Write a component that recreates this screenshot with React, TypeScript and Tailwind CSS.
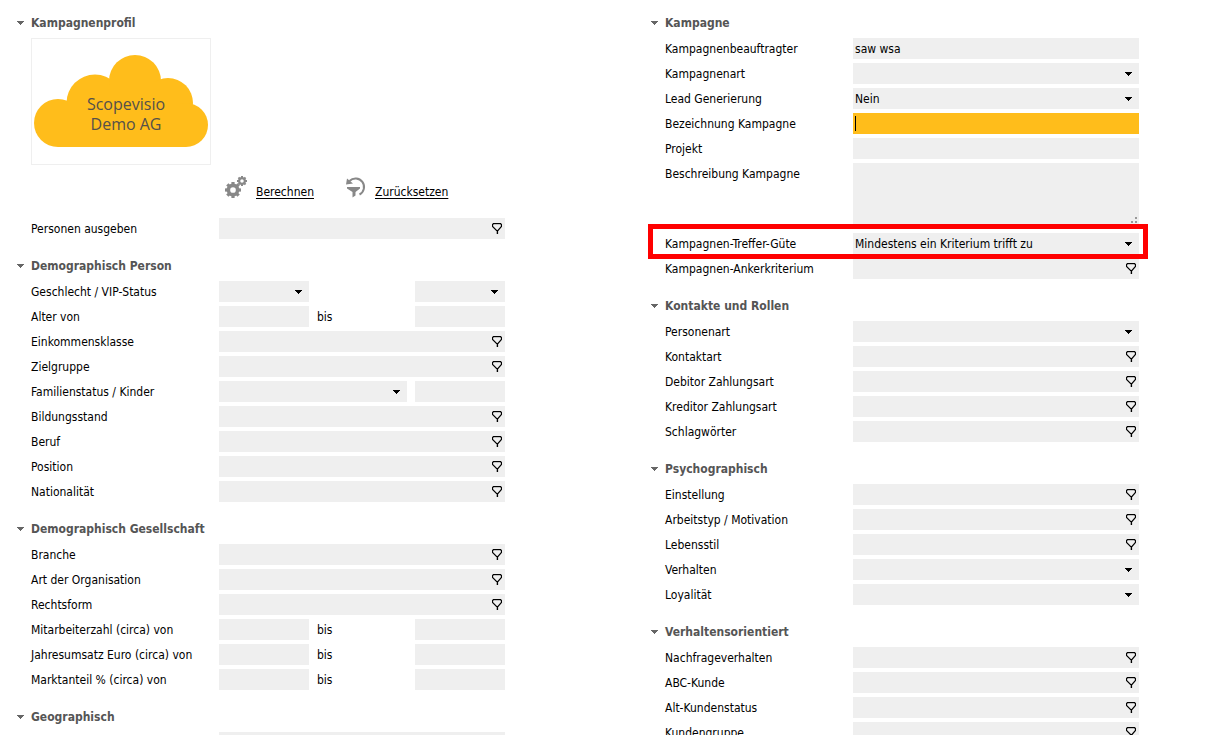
import React from "react";

type Kind = "text" | "select" | "lookup";

interface FieldProps {
  id: string;
  label: string;
  kind?: Kind;
  value?: string;
  active?: boolean;
  className?: string;
}

interface RowData {
  label: string;
  kind?: Kind;
  value?: string;
  active?: boolean;
}

const Arrow = ({ className = "" }: { className?: string }) => (
  <svg className={className} width="7" height="4" viewBox="0 0 7 4" fill="currentColor" shapeRendering="crispEdges">
    <path d="M0 0h7v1H6v1H5v1H4v1H3V3H2V2H1V1H0z" />
  </svg>
);

const LookupIcon = () => (
  <svg width="10" height="11" viewBox="0 0 10 11" fill="none" stroke="black">
    <path d="M1.5 0.5h7l1 1v2L6 7.500H4.500L0.500 3.500v-2z" strokeWidth="1.200" />
    <path d="M1 0.600h8" strokeWidth="1.200" />
    <path d="M5.400 7v4" strokeWidth="1.400" />
  </svg>
);

const Field = ({ id, label, kind = "text", value = "", active = false, className = "flex-1" }: FieldProps) => (
  <div className={`relative flex h-[21px] min-w-0 ${active ? "bg-[#ffbd1b]" : "bg-[#efefef]"} ${className}`}>
    {kind === "select" ? (
      <>
        <select id={id} aria-label={label} defaultValue={value} className="w-full appearance-none bg-transparent px-0.5 pt-px outline-none">
          <option value={value}>{value}</option>
        </select>
        <Arrow className="pointer-events-none absolute top-[9px] right-[7px]" />
      </>
    ) : (
      <input id={id} aria-label={label} type="text" defaultValue={value} className="w-full min-w-0 bg-transparent px-0.5 pt-px outline-none" />
    )}
    {kind === "lookup" && (
      <button type="button" aria-label={`${label} suchen`} className="flex w-4 shrink-0 items-center justify-end pr-[3px]">
        <LookupIcon />
      </button>
    )}
    {active && <span className="absolute top-[3px] left-0.5 h-[15px] w-px bg-black" />}
  </div>
);

const Row = ({ id, label, children, className = "h-[21px]" }: { id: string; label: string; children: React.ReactNode; className?: string }) => (
  <div className={`flex ${className}`}>
    <label htmlFor={id} className="w-[188px] shrink-0 pt-px">
      {label}
    </label>
    {children}
  </div>
);

const SimpleRow = ({ label, ...field }: RowData) => (
  <Row id={label} label={label}>
    <Field id={label} label={label} {...field} />
  </Row>
);

const RangeRow = ({ label }: { label: string }) => (
  <Row id={label} label={label}>
    <Field id={label} label={label} className="w-[90px]" />
    <label htmlFor={`${label}-bis`} className="flex-1 pt-px pl-2">
      bis
    </label>
    <Field id={`${label}-bis`} label={`${label} bis`} className="w-[90px]" />
  </Row>
);

const Section = ({ title, children }: { title: string; children?: React.ReactNode }) => (
  <section className="mb-4">
    <h2 className="mb-[5px] h-[21px] pl-px font-bold text-[#555555]">
      <button type="button" className="flex items-center gap-[7px]">
        <Arrow className="text-[#666666]" />
        <span className="pt-px">{title}</span>
      </button>
    </h2>
    <div className="flex flex-col gap-1 pl-[15px]">{children}</div>
  </section>
);

const CompanyLogo = () => (
  <div className="w-[180px] border border-[#efefef]">
    <svg width="178" height="125" viewBox="32 39 178 125">
      <g fill="#ffbd1b">
        <circle cx="58" cy="123" r="24" />
        <circle cx="95" cy="103" r="28.5" />
        <circle cx="135" cy="81" r="26" />
        <circle cx="168" cy="103" r="25" />
        <circle cx="186" cy="125" r="22" />
        <path d="M58 104h128v43H58z" />
        <path d="M90 85h80v30H90z" />
      </g>
      <g fill="#55504a" fontFamily="Open Sans, sans-serif" fontSize="16" textAnchor="middle">
        <text x="126" y="110">Scopevisio</text>
        <text x="126" y="130">Demo AG</text>
      </g>
    </svg>
  </div>
);

const Cog = ({ cx, cy, r }: { cx: number; cy: number; r: number }) => (
  <g transform={`translate(${cx} ${cy})`}>
    <circle r={r * 0.58} fill="none" stroke="#888888" strokeWidth={r * 0.45} />
    {[0, 45, 90, 135, 180, 225, 270, 315].map((angle) => (
      <rect
        key={angle}
        x={-r * 0.2}
        y={-r}
        width={r * 0.4}
        height={r * 0.36}
        fill="#888888"
        transform={`rotate(${angle})`}
      />
    ))}
  </g>
);

const CogsIcon = () => (
  <svg width="22" height="22" viewBox="0 0 22 22">
    <Cog cx={8} cy={14} r={8} />
    <Cog cx={17} cy={5} r={5} />
  </svg>
);

const ResetIcon = () => (
  <svg width="20" height="22" viewBox="0 0 20 22">
    <path d="M3.500 5A8.500 8.500 0 1 1 13.500 18.500" fill="none" stroke="#888888" strokeWidth="2" />
    <path d="M1 2.500L0 8.500L7 7.500z" fill="#888888" />
    <path d="M1 11h13v1.500L9.500 16v3.500L6.500 21.500V16L1 12.500z" fill="#888888" />
  </svg>
);

const personRows: RowData[] = [
  { label: "Bildungsstand", kind: "lookup" },
  { label: "Beruf", kind: "lookup" },
  { label: "Position", kind: "lookup" },
  { label: "Nationalität", kind: "lookup" },
];

const companyRows: RowData[] = [
  { label: "Branche", kind: "lookup" },
  { label: "Art der Organisation", kind: "lookup" },
  { label: "Rechtsform", kind: "lookup" },
];

const campaignRows: RowData[] = [
  { label: "Kampagnenbeauftragter", value: "saw wsa" },
  { label: "Kampagnenart", kind: "select" },
  { label: "Lead Generierung", kind: "select", value: "Nein" },
  { label: "Bezeichnung Kampagne", active: true },
  { label: "Projekt" },
];

const contactRows: RowData[] = [
  { label: "Personenart", kind: "select" },
  { label: "Kontaktart", kind: "lookup" },
  { label: "Debitor Zahlungsart", kind: "lookup" },
  { label: "Kreditor Zahlungsart", kind: "lookup" },
  { label: "Schlagwörter", kind: "lookup" },
];

const psychoRows: RowData[] = [
  { label: "Einstellung", kind: "lookup" },
  { label: "Arbeitstyp / Motivation", kind: "lookup" },
  { label: "Lebensstil", kind: "lookup" },
  { label: "Verhalten", kind: "select" },
  { label: "Loyalität", kind: "select" },
];

const behaviourRows: RowData[] = [
  { label: "Nachfrageverhalten", kind: "lookup" },
  { label: "ABC-Kunde", kind: "lookup" },
  { label: "Alt-Kundenstatus", kind: "lookup" },
  { label: "Kundengruppe", kind: "lookup" },
];

const Rows = ({ rows }: { rows: RowData[] }) => (
  <>
    {rows.map((row) => (
      <SimpleRow key={row.label} {...row} />
    ))}
  </>
);

const App = () => {
  return (
    <main className="grid h-screen grid-cols-2 gap-x-[145px] overflow-hidden bg-white pt-3 pr-[88px] pl-4 font-['DejaVu_Sans_Condensed','DejaVu_Sans',sans-serif] text-[12px] leading-[21px] text-black">
      <div>
        <Section title="Kampagnenprofil">
          <CompanyLogo />
          <div className="mt-[7px] mb-[11px] flex gap-8 pl-[194px]">
            <a href="#berechnen" className="flex items-end gap-[9px] underline underline-offset-2">
              <span className="pb-[5px]">
                <CogsIcon />
              </span>
              Berechnen
            </a>
            <a href="#zuruecksetzen" className="flex items-end gap-[9px] underline underline-offset-2">
              <span className="pb-[5px]">
                <ResetIcon />
              </span>
              Zurücksetzen
            </a>
          </div>
          <SimpleRow label="Personen ausgeben" kind="lookup" />
        </Section>

        <Section title="Demographisch Person">
          <Row id="geschlecht" label="Geschlecht / VIP-Status">
            <Field id="geschlecht" label="Geschlecht" kind="select" className="w-[90px]" />
            <Field id="vip" label="VIP-Status" kind="select" className="ml-auto w-[90px]" />
          </Row>
          <RangeRow label="Alter von" />
          <SimpleRow label="Einkommensklasse" kind="lookup" />
          <SimpleRow label="Zielgruppe" kind="lookup" />
          <Row id="familienstatus" label="Familienstatus / Kinder">
            <Field id="familienstatus" label="Familienstatus" kind="select" />
            <Field id="kinder" label="Kinder" className="ml-2 w-[90px]" />
          </Row>
          <Rows rows={personRows} />
        </Section>

        <Section title="Demographisch Gesellschaft">
          <Rows rows={companyRows} />
          <RangeRow label="Mitarbeiterzahl (circa) von" />
          <RangeRow label="Jahresumsatz Euro (circa) von" />
          <RangeRow label="Marktanteil % (circa) von" />
        </Section>

        <Section title="Geographisch">
          <div className="ml-[188px] flex">
            <Field id="geographisch" label="Geographisch" />
          </div>
        </Section>
      </div>

      <div>
        <Section title="Kampagne">
          <Rows rows={campaignRows} />
          <Row id="beschreibung" label="Beschreibung Kampagne" className="h-[66px]">
            <div className="relative flex flex-1 bg-[#efefef]">
              <textarea id="beschreibung" className="w-full resize-none bg-transparent px-0.5 outline-none" />
              <svg className="absolute right-0.5 bottom-1.5 text-[#999999]" width="6" height="6" viewBox="0 0 6 6" fill="currentColor">
                <path d="M4 0h2v2H4zM0 4h2v2H0zM4 4h2v2H4z" />
              </svg>
            </div>
          </Row>
          <div className="relative">
            <SimpleRow label="Kampagnen-Treffer-Güte" kind="select" value="Mindestens ein Kriterium trifft zu" />
            {/* highlight frame around the row */}
            <div className="pointer-events-none absolute -top-[9px] -right-[9px] -bottom-[5px] -left-[17px] z-10 border-5 border-[#ff0000]" />
          </div>
          <SimpleRow label="Kampagnen-Ankerkriterium" kind="lookup" />
        </Section>

        <Section title="Kontakte und Rollen">
          <Rows rows={contactRows} />
        </Section>

        <Section title="Psychographisch">
          <Rows rows={psychoRows} />
        </Section>

        <Section title="Verhaltensorientiert">
          <Rows rows={behaviourRows} />
        </Section>
      </div>
    </main>
  );
};

export default App;
